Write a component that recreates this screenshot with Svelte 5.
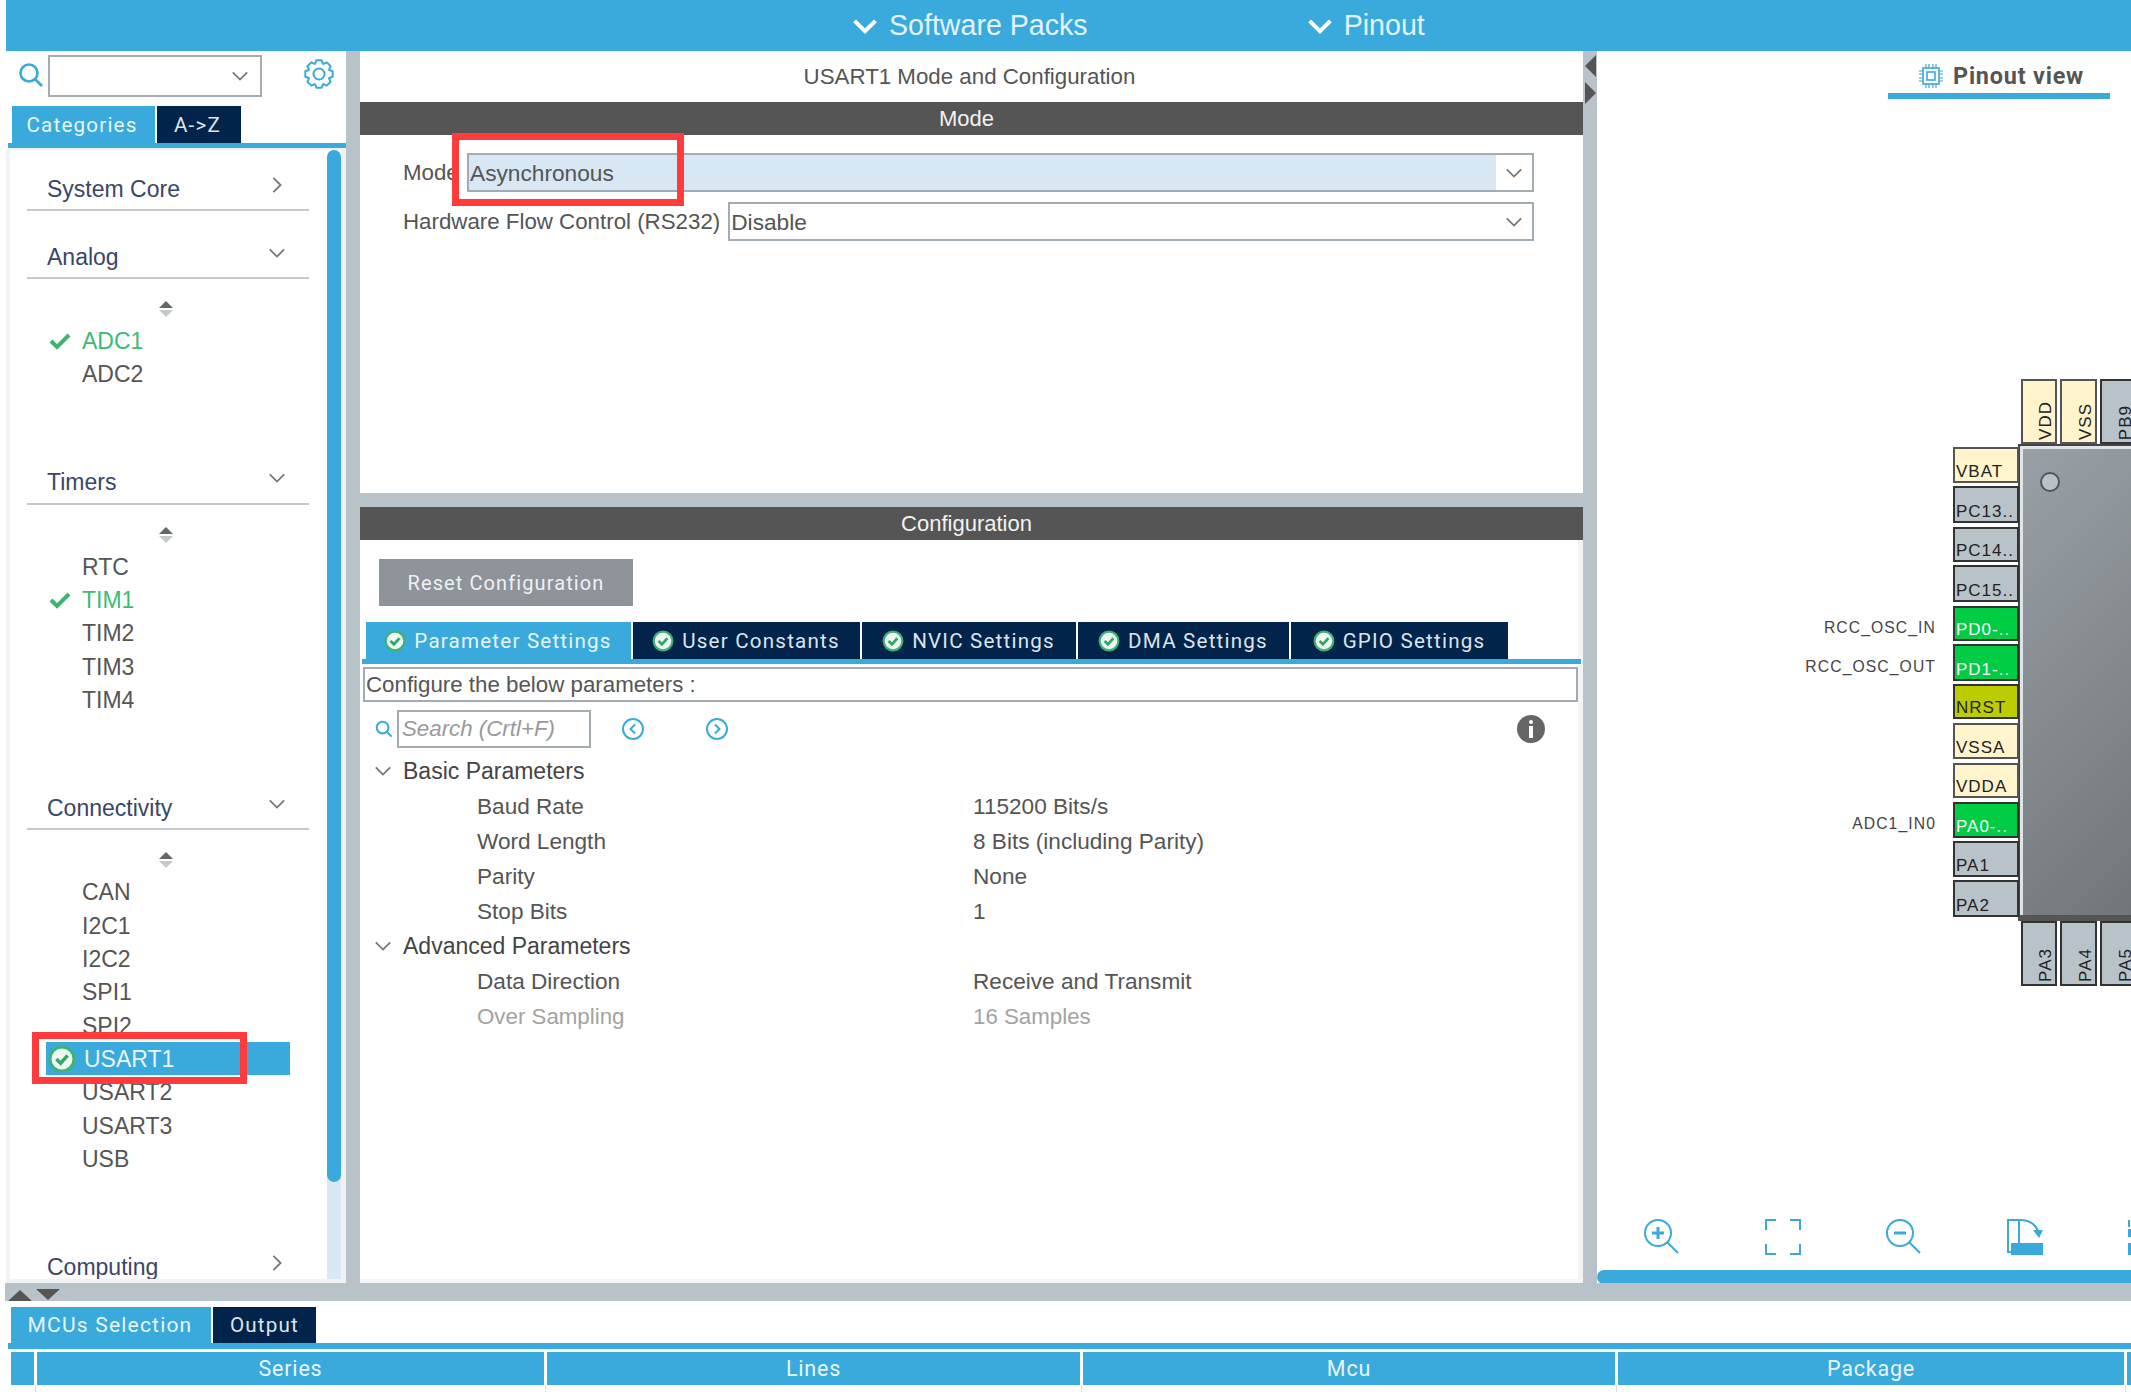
<script>
  const groups = [
    { name: 'System Core', open: false },
    { name: 'Analog', open: true, items: [{ n: 'ADC1', ok: true }, { n: 'ADC2' }] },
    { name: 'Timers', open: true, items: [{ n: 'RTC' }, { n: 'TIM1', ok: true }, { n: 'TIM2' }, { n: 'TIM3' }, { n: 'TIM4' }] },
    { name: 'Connectivity', open: true, items: [{ n: 'CAN' }, { n: 'I2C1' }, { n: 'I2C2' }, { n: 'SPI1' }, { n: 'SPI2' }, { n: 'USART1', sel: true }, { n: 'USART2' }, { n: 'USART3' }, { n: 'USB' }] },
    { name: 'Computing', open: false },
  ];

  const tabs = [
    { label: 'Parameter Settings', w: 265, active: true },
    { label: 'User Constants', w: 227 },
    { label: 'NVIC Settings', w: 214 },
    { label: 'DMA Settings', w: 211 },
    { label: 'GPIO Settings', w: 217 },
  ];

  const params = [
    { title: 'Basic Parameters', rows: [['Baud Rate', '115200 Bits/s'], ['Word Length', '8 Bits (including Parity)'], ['Parity', 'None'], ['Stop Bits', '1']] },
    { title: 'Advanced Parameters', rows: [['Data Direction', 'Receive and Transmit'], ['Over Sampling', '16 Samples', true]] },
  ];

  // page coordinates of the pinout, turned into canvas offsets below
  const OX = 1597, OY = 51;
  const leftPins = [
    ['VBAT', 447, 483, 'pwr'], ['PC13..', 486, 523, ''], ['PC14..', 527, 562, ''], ['PC15..', 565, 602, ''],
    ['PD0-..', 606, 641, 'on', 'RCC_OSC_IN'], ['PD1-..', 644, 681, 'on', 'RCC_OSC_OUT'], ['NRST', 684, 719, 'rst'],
    ['VSSA', 723, 759, 'pwr'], ['VDDA', 763, 798, 'pwr'], ['PA0-..', 802, 838, 'on', 'ADC1_IN0'], ['PA1', 841, 877, ''], ['PA2', 880, 917, ''],
  ];
  const topPins = [['VDD', 2021, 36, 'pwr'], ['VSS', 2060, 37, 'pwr'], ['PB9', 2100, 37, '']];
  const bottomPins = [['PA3', 2021, 36, ''], ['PA4', 2060, 37, ''], ['PA5', 2100, 37, '']];

  const columns = [['', 23], ['Series', 507], ['Lines', 533], ['Mcu', 532], ['Package', 506], ['', 4]];

  // gear outline with 8 teeth
  function gearPath(cx, cy, r1, r2, n) {
    let d = '';
    for (let i = 0; i < n; i++) {
      const a = (i * 2 * Math.PI) / n;
      const w = Math.PI / n;
      const pts = [[r1, a - w * 0.95], [r2, a - w * 0.5], [r2, a + w * 0.5], [r1, a + w * 0.95]];
      for (const [r, t] of pts) {
        d += (d ? 'L' : 'M') + (cx + r * Math.cos(t)).toFixed(1) + ' ' + (cy + r * Math.sin(t)).toFixed(1);
      }
    }
    return d + 'Z';
  }
</script>

{#snippet okBadge()}
  <svg class="ok-badge" viewBox="0 0 20 20">
    <circle cx="10" cy="10" r="9.5" fill="#3cb371" />
    <circle cx="10" cy="10" r="7.5" fill="#eef7f2" />
    <path d="M6 10l3 3 5-5.5" fill="none" stroke="#2fa866" stroke-width="2.4" />
  </svg>
{/snippet}

{#snippet chevron(dir)}
  <svg class="chev" viewBox="0 0 20 20">
    {#if dir === 'down'}
      <path d="M2 6l8 8 8-8" />
    {:else}
      <path d="M6 2l8 8-8 8" />
    {/if}
  </svg>
{/snippet}

{#snippet selectBox(text, cls)}
  <div class="select {cls}">
    <span class="select-val">{text}</span>
    <span class="select-arrow">{@render chevron('down')}</span>
  </div>
{/snippet}

<div class="app">
  <header class="topbar">
    <div class="top-item top-packs">{@render chevron('down')}<span>Software Packs</span></div>
    <div class="top-item top-pinout">{@render chevron('down')}<span>Pinout</span></div>
  </header>

  <div class="workspace">
    <aside class="left">
      <div class="left-search">
        <svg class="search-ico" viewBox="0 0 26 26">
          <circle cx="11" cy="11" r="8.5" fill="none" stroke="#3aa9dc" stroke-width="2.6" />
          <path d="M17 17l7 7" stroke="#3aa9dc" stroke-width="2.6" />
        </svg>
        <div class="left-select">{@render chevron('down')}</div>
        <svg class="gear" viewBox="0 0 30 30">
          <path d={gearPath(15, 15, 11, 14, 8)} fill="none" stroke="#3aa9dc" stroke-width="2" stroke-linejoin="round" />
          <circle cx="15" cy="15" r="5.5" fill="none" stroke="#3aa9dc" stroke-width="2" />
        </svg>
      </div>
      <div class="tabs left-tabs">
        <div class="tab active cat">Categories</div>
        <div class="tab az">A-&gt;Z</div>
      </div>
      <div class="tabline"></div>

      <div class="left-body">
        <div class="list">
          {#each groups as g}
            <section class="group">
              <div class="group-head">
                <span>{g.name}</span>
                {@render chevron(g.open ? 'down' : 'right')}
              </div>
              {#if g.items}
                <div class="sort-ico"><i class="up"></i><i class="dn"></i></div>
                <ul class="items">
                  {#each g.items as it}
                    <li class:ok={it.ok} class:sel={it.sel}>
                      {#if it.ok}
                        <svg class="check" viewBox="0 0 22 18"><path d="M2 9l6 6L20 3" fill="none" stroke="#3cb371" stroke-width="4" /></svg>
                      {/if}
                      {#if it.sel}{@render okBadge()}{/if}
                      {it.n}
                    </li>
                  {/each}
                </ul>
              {/if}
            </section>
          {/each}
        </div>
        <div class="vscroll"><div class="vthumb"></div></div>
      </div>
    </aside>

    <div class="vsep"></div>

    <main class="center">
      <div class="center-title">USART1 Mode and Configuration</div>
      <div class="bar">Mode</div>
      <div class="mode-body">
        <div class="form-row">
          <label class="short">Mode</label>
          {@render selectBox('Asynchronous', 'hl')}
        </div>
        <div class="form-row">
          <label>Hardware Flow Control (RS232)</label>
          {@render selectBox('Disable', '')}
        </div>
      </div>
      <div class="hsep"></div>
      <div class="bar">Configuration</div>
      <div class="config">
        <button class="reset">Reset Configuration</button>
        <div class="tabs conf-tabs">
          {#each tabs as t}
            <div class="tab" class:active={t.active} style:width="{t.w}px">
              {@render okBadge()}<span>{t.label}</span>
            </div>
          {/each}
        </div>
        <div class="tabline conf-line"></div>
        <div class="describe">Configure the below parameters :</div>
        <div class="search-row">
          <svg class="search-small" viewBox="0 0 26 26">
            <circle cx="11" cy="11" r="8.5" fill="none" stroke="#3aa9dc" stroke-width="3" />
            <path d="M17 17l7 7" stroke="#3aa9dc" stroke-width="3" />
          </svg>
          <div class="search-input">Search (Crtl+F)</div>
          <svg class="nav-ico nav-prev" viewBox="0 0 24 24">
            <circle cx="12" cy="12" r="10" fill="none" stroke="#3aa9dc" stroke-width="2" />
            <path d="M14 7.5L9.5 12l4.5 4.5" fill="none" stroke="#3aa9dc" stroke-width="2" />
          </svg>
          <svg class="nav-ico nav-next" viewBox="0 0 24 24">
            <circle cx="12" cy="12" r="10" fill="none" stroke="#3aa9dc" stroke-width="2" />
            <path d="M10 7.5l4.5 4.5L10 16.5" fill="none" stroke="#3aa9dc" stroke-width="2" />
          </svg>
          <svg class="info" viewBox="0 0 28 28">
            <circle cx="14" cy="14" r="14" fill="#666" />
            <rect x="12" y="5" width="4" height="4" rx="2" fill="#fff" />
            <rect x="12" y="11" width="4" height="12" fill="#fff" />
          </svg>
        </div>
        <div class="tree">
          {#each params as p}
            <div class="tree-head">{@render chevron('down')}<span>{p.title}</span></div>
            {#each p.rows as r}
              <div class="tree-row" class:muted={r[2]}>
                <span>{r[0]}</span><span>{r[1]}</span>
              </div>
            {/each}
          {/each}
        </div>
      </div>
    </main>

    <div class="vsep collapse">
      <i class="tri-l"></i>
      <i class="tri-r"></i>
    </div>

    <section class="right">
      <div class="view-head">
        <div class="view-tab">
          <svg class="chip-ico" viewBox="0 0 24 24">
            <rect x="4" y="4" width="16" height="16" fill="none" stroke="#3aa9dc" stroke-width="1.6" />
            <rect x="8" y="8" width="8" height="8" fill="none" stroke="#3aa9dc" stroke-width="1.6" />
            <path d="M7 0v4M10 0v4M14 0v4M17 0v4M7 20v4M10 20v4M14 20v4M17 20v4M0 7h4M0 10h4M0 14h4M0 17h4M20 7h4M20 10h4M20 14h4M20 17h4" stroke="#3aa9dc" stroke-width="1.2" />
          </svg>
          Pinout view
        </div>
      </div>

      <!-- chip diagram: free canvas -->
      <div class="chip">
        <i class="chip-dot"></i>
      </div>
      {#each leftPins as p}
        <div class="pin pin-left {p[3]}" style:top="{p[1] - OY}px" style:height="{p[2] - p[1]}px">{p[0]}</div>
        {#if p[4]}
          <div class="pin-label" style:top="{p[1] - OY}px" style:height="{p[2] - p[1]}px">{p[4]}</div>
        {/if}
      {/each}
      {#each topPins as p}
        <div class="pin pin-v pin-top {p[3]}" style:left="{p[1] - OX}px" style:width="{p[2]}px"><span>{p[0]}</span></div>
      {/each}
      {#each bottomPins as p}
        <div class="pin pin-v pin-bottom {p[3]}" style:left="{p[1] - OX}px" style:width="{p[2]}px"><span>{p[0]}</span></div>
      {/each}

      <div class="view-tools">
        <svg viewBox="0 0 36 36">
          <circle cx="14" cy="14" r="13" />
          <path d="M14 8v12M8 14h12" stroke-width="3" />
          <path d="M23 23l11 11" />
        </svg>
        <svg viewBox="0 0 36 36">
          <path d="M1 11V1h10M25 1h10v10M35 25v10H25M11 35H1V25" />
        </svg>
        <svg viewBox="0 0 36 36">
          <circle cx="14" cy="14" r="13" />
          <path d="M8 14h12" stroke-width="3" />
          <path d="M23 23l11 11" />
        </svg>
        <svg viewBox="0 0 36 36">
          <path d="M1 1h11v32H1z" />
          <path d="M12 1c8 0 16 3 19 11" />
          <path class="fill" d="M26 11h10l-4 8zM4 24h32v12H4z" />
        </svg>
        <svg viewBox="0 0 36 36">
          <path d="M1 8V1" />
          <path class="fill" d="M0 10h8v8H0zM0 24h36v12H0z" />
        </svg>
      </div>
      <div class="hscroll"></div>
    </section>
  </div>

  <div class="band">
    <i class="band-up"></i>
    <i class="band-dn"></i>
  </div>

  <footer class="bottom">
    <div class="tabs bottom-tabs">
      <div class="tab active mcu">MCUs Selection</div>
      <div class="tab out">Output</div>
    </div>
    <div class="tabline bottom-line"></div>
    <div class="table-head">
      {#each columns as c}
        <div style:width="{c[1]}px">{c[0]}</div>
      {/each}
    </div>
    <div class="table-row">
      {#each columns as c}
        <div style:width="{c[1]}px"></div>
      {/each}
    </div>
  </footer>

  <div class="red red-mode"></div>
  <div class="red red-usart"></div>
</div>

<style>
  :global(body) { margin: 0; background: #fff; }

  .app {
    position: relative;
    width: 2131px; height: 1392px;
    padding-left: 6px; box-sizing: border-box;
    overflow: hidden;
    display: flex; flex-direction: column;
    background: #fff;
    font-family: "Liberation Sans", Arial, sans-serif;
    font-size: 23px; color: #555;
  }

  /* top bar */
  .topbar { height: 51px; flex: none; background: #3aa9dc; display: flex; align-items: center; color: #e4f3fb; font-family: "Liberation Sans", Arial, sans-serif; font-size: 28.6px; }
  .top-item { display: flex; align-items: center; gap: 11px; }
  .top-item .chev { width: 26px; height: 26px; stroke: #fff; stroke-width: 3; }
  .top-packs { margin-left: 846px; }
  .top-pinout { margin-left: 219px; }

  .chev { fill: none; stroke: #777; stroke-width: 2; flex: none; }

  .workspace { flex: none; height: 1232px; display: flex; }
  .vsep { width: 14px; flex: none; background: #b8c3c9; }

  /* left panel */
  .left { width: 340px; flex: none; display: flex; flex-direction: column; }
  .left-search { height: 55px; flex: none; display: flex; align-items: center; padding: 0 0 5px 12px; box-sizing: border-box; }
  .search-ico { width: 26px; height: 26px; margin-top: -2px; }
  .left-select { width: 214px; height: 42px; margin-left: 4px; box-sizing: border-box; border: 2px solid #a2acb2; display: flex; align-items: center; justify-content: flex-end; padding-right: 11px; }
  .left-select .chev { width: 18px; height: 18px; }
  .gear { width: 30px; height: 30px; margin-left: 42px; margin-top: -4px; }

  .tabs { display: flex; gap: 2px; flex: none; }
  .tab { display: flex; align-items: center; justify-content: center; box-sizing: border-box; background: #02234a; color: #dde5ec; font-family: Roboto, sans-serif; font-size: 20.6px; letter-spacing: 1.2px; }
  .tab.active { background: #3aa9dc; color: #e8f5fb; }
  .left-tabs { height: 37px; padding-left: 6px; }
  .cat { width: 143px; padding-right: 3px; }
  .az { width: 84px; padding-right: 3px; }
  .tabline { height: 5px; flex: none; background: #3aa9dc; }
  .left-tabs + .tabline { margin-left: 2px; }

  .left-body { flex: 1; min-height: 0; display: flex; background: #fff; border: solid #f0f2f3; border-width: 2px 5px 4px 4px; overflow: hidden; }
  .list { flex: 1; min-width: 0; padding: 18px 18px 0 17px; overflow: hidden; }
  .group { margin-bottom: 25px; }
  .group-head { height: 43px; box-sizing: border-box; border-bottom: 2px solid #c0cad0; display: flex; align-items: center; justify-content: space-between; padding: 0 23px 0 20px; color: #3a4668; font-size: 23px; }
  .group-head span { padding-top: 1px; }
  .group-head .chev { width: 18px; height: 18px; margin-top: -8px; }
  .sort-ico { height: 45px; display: flex; flex-direction: column; align-items: center; justify-content: flex-start; gap: 2px; padding-top: 22px; box-sizing: border-box; width: 278px; }
  .sort-ico i { width: 0; height: 0; border-left: 7px solid transparent; border-right: 7px solid transparent; }
  .sort-ico .up { border-bottom: 7px solid #666; }
  .sort-ico .dn { border-top: 7px solid #c4c9cc; }
  .items { list-style: none; margin: 0; padding: 0 0 46px; }
  .items li { position: relative; height: 33.35px; line-height: 34px; padding-left: 55px; white-space: nowrap; }
  .items li.ok { color: #3dbb74; }
  .check { position: absolute; left: 22px; top: 8px; width: 22px; height: 18px; }
  .items li.sel { background: #3aa9dc; color: #e9f6fc; margin-left: 19px; margin-right: 19px; padding-left: 38px; }
  .items li.sel .ok-badge { position: absolute; left: 2px; top: 3px; width: 28px; height: 28px; }
  .vscroll { width: 14px; flex: none; background: #d8e8f5; border-radius: 7px 7px 0 0; }
  .vthumb { height: 1032px; background: #3aa9dc; border-radius: 7px; }

  /* center panel */
  .center { width: 1223px; flex: none; display: flex; flex-direction: column; background: #fff; border: solid #f2f4f5; border-width: 0 0 4px 0; box-sizing: border-box; }
  .center-title { height: 51px; flex: none; display: flex; align-items: center; justify-content: center; padding: 1px 4px 0 0; box-sizing: border-box; font-size: 22.3px; }
  .bar { height: 33px; flex: none; background: #545554; color: #f2f2f2; display: flex; align-items: center; justify-content: center; padding: 1px 10px 0 0; box-sizing: border-box; font-size: 22px; }
  .mode-body { height: 358px; flex: none; padding: 18px 49px 0 43px; box-sizing: border-box; display: flex; flex-direction: column; gap: 10px; }
  .form-row { display: flex; align-items: center; gap: 8px; height: 39px; font-size: 22.3px; }
  .form-row .short { width: 56px; }
  .select { flex: 1; height: 39px; box-sizing: border-box; border: 2px solid #a2acb2; display: flex; align-items: center; }
  .select-val { flex: 1; height: 100%; line-height: 36px; padding-left: 1px; font-size: 22.7px; }
  .select.hl .select-val { background: #d7e7f4; }
  .select-arrow { width: 36px; display: flex; align-items: center; justify-content: center; }
  .select-arrow .chev { width: 18px; height: 18px; }
  .hsep { height: 14px; flex: none; background: #b8c3c9; }

  .config { flex: 1; min-height: 0; display: flex; flex-direction: column; border-right: 5px solid #f2f4f5; }
  .reset { align-self: flex-start; margin: 19px 0 0 19px; width: 254px; height: 47px; border: none; background: #8e9499; color: #eef1f2; font-family: Roboto, sans-serif; font-size: 20px; letter-spacing: 1.1px; }
  .conf-tabs { height: 37px; margin: 16px 0 0 6px; }
  .conf-tabs .tab { gap: 8px; padding-right: 1px; }
  .ok-badge { width: 22px; height: 22px; flex: none; }
  .conf-line { margin: 0 -3px 0 2px; }
  .describe { height: 35px; flex: none; box-sizing: border-box; margin: 3px 0 0 3px; border: 2px solid #a2acb2; line-height: 31px; padding-left: 1px; color: #555; font-size: 22.3px; }
  .search-row { height: 38px; flex: none; margin-top: 8px; display: flex; align-items: center; position: relative; }
  .search-small { width: 18px; height: 18px; margin-left: 15px; }
  .search-input { width: 194px; height: 38px; margin-left: 4px; box-sizing: border-box; border: 2px solid #a2acb2; color: #9a9a9a; font-style: italic; font-size: 22.3px; line-height: 34px; padding-left: 3px; }
  .nav-ico { width: 24px; height: 24px; flex: none; }
  .nav-prev { margin-left: 30px; }
  .nav-next { margin-left: 60px; }
  .info { width: 28px; height: 28px; margin-left: auto; margin-right: 33px; }

  .tree { margin-top: 6px; }
  .tree-head, .tree-row { height: 35px; display: flex; align-items: center; color: #555; }
  .tree-head { padding-left: 14px; gap: 11px; color: #444; }
  .tree-head .chev { width: 18px; height: 18px; margin-top: -2px; }
  .tree-row { padding-left: 117px; font-size: 22.6px; }
  .tree-row span:first-child { width: 496px; flex: none; }
  .tree-row.muted { color: #a3a3a3; font-size: 22.3px; }

  .collapse { display: flex; flex-direction: column; align-items: center; padding-top: 4px; gap: 5px; box-sizing: border-box; }
  .tri-l, .tri-r { width: 0; height: 0; border-top: 11px solid transparent; border-bottom: 11px solid transparent; }
  .tri-l { border-right: 11px solid #555; }
  .tri-r { border-left: 11px solid #555; }

  /* right panel */
  .right { flex: 1; min-width: 0; position: relative; overflow: hidden; display: flex; flex-direction: column; }
  .view-head { display: flex; justify-content: flex-end; padding-right: 21px; height: 48px; flex: none; }
  .view-tab { width: 222px; height: 48px; box-sizing: border-box; border-bottom: 6px solid #3aa9dc; display: flex; align-items: center; padding: 8px 0 0 31px; gap: 10px; color: #555; font-family: Roboto, sans-serif; font-weight: 700; font-size: 23.4px; letter-spacing: 0.8px; }
  .chip-ico { width: 24px; height: 24px; flex: none; }

  .chip { position: absolute; left: 421px; top: 393px; width: 300px; height: 477px; box-sizing: border-box; border: 2px solid #444; border-bottom-width: 6px; border-bottom-color: #555; background: linear-gradient(135deg, #9aa1a6, #63686b); box-shadow: inset 3px 3px 0 #dfe4e7; }
  .chip-dot { position: absolute; left: 20px; top: 26px; width: 20px; height: 20px; box-sizing: border-box; border-radius: 50%; background: #b8c3c9; border: 2px solid #555; }

  .pin { position: absolute; box-sizing: border-box; border: 2px solid #333; background: #b8c3c9; color: #222; font-size: 17px; letter-spacing: 1px; }
  .pin-left { left: 356px; width: 66px; display: flex; align-items: flex-end; padding: 0 0 0 1px; line-height: 18px; overflow: hidden; }
  .pin.pwr { background: #fff4cc; border-color: #555; }
  .pin.on { background: #00cc44; color: #fff; }
  .pin.rst { background: #bdcc00; }
  .pin-label { position: absolute; left: 140px; width: 199px; box-sizing: border-box; padding-top: 8px; text-align: right; display: flex; align-items: center; justify-content: flex-end; font-size: 15.7px; letter-spacing: 1.1px; color: #444; }
  .pin-v { display: flex; align-items: flex-end; justify-content: flex-end; padding: 0 4px 2px 0; height: 65px; }
  .pin-v span { writing-mode: vertical-rl; transform: rotate(180deg); line-height: 11px; }
  .pin-top { top: 328px; }
  .pin-bottom { top: 870px; }

  .view-tools { margin-top: auto; height: 51px; flex: none; display: flex; gap: 85px; padding-left: 47px; overflow: hidden; }
  .view-tools svg { width: 36px; height: 36px; flex: none; fill: none; stroke: #3aa9dc; stroke-width: 2; }
  .view-tools .fill { fill: #3aa9dc; stroke: none; }
  .hscroll { height: 14px; flex: none; background: #3aa9dc; border-radius: 7px 0 0 7px; margin-bottom: -1px; }

  /* bottom */
  .band { height: 18px; flex: none; background: #b8c3c9; margin-left: -1px; display: flex; align-items: flex-end; gap: 4px; padding-left: 3px; }
  .band-up, .band-dn { width: 0; height: 0; border-left: 12px solid transparent; border-right: 12px solid transparent; }
  .band-up { border-bottom: 11px solid #555; }
  .band-dn { border-top: 11px solid #555; margin-bottom: 1px; }

  .bottom { flex: 1; min-height: 0; display: flex; flex-direction: column; padding-top: 6px; }
  .bottom-tabs { height: 36px; padding-left: 5px; }
  .mcu { width: 200px; font-size: 21px; padding-right: 2px; }
  .out { width: 103px; }
  .bottom-line { height: 6px; margin-left: 2px; }
  .table-head { display: flex; gap: 3px; height: 33px; margin: 3px 0 0 5px; flex: none; }
  .table-head div { flex: none; background: #3aa9dc; color: #e8f5fb; display: flex; align-items: center; justify-content: center; font-family: Roboto, sans-serif; font-size: 21.5px; letter-spacing: 0.8px; }
  .table-row { display: flex; gap: 3px; height: 8px; margin-left: 5px; }
  .table-row div { flex: none; box-sizing: border-box; border-right: 1px solid #ddd; transform: translateX(2px); }

  /* callouts drawn over the screenshot */
  .red { position: absolute; box-sizing: border-box; border: 7px solid #ff3b3b; }
  .red-mode { left: 452px; top: 133px; width: 232px; height: 73px; }
  .red-usart { left: 32px; top: 1032px; width: 215px; height: 52px; }
</style>
